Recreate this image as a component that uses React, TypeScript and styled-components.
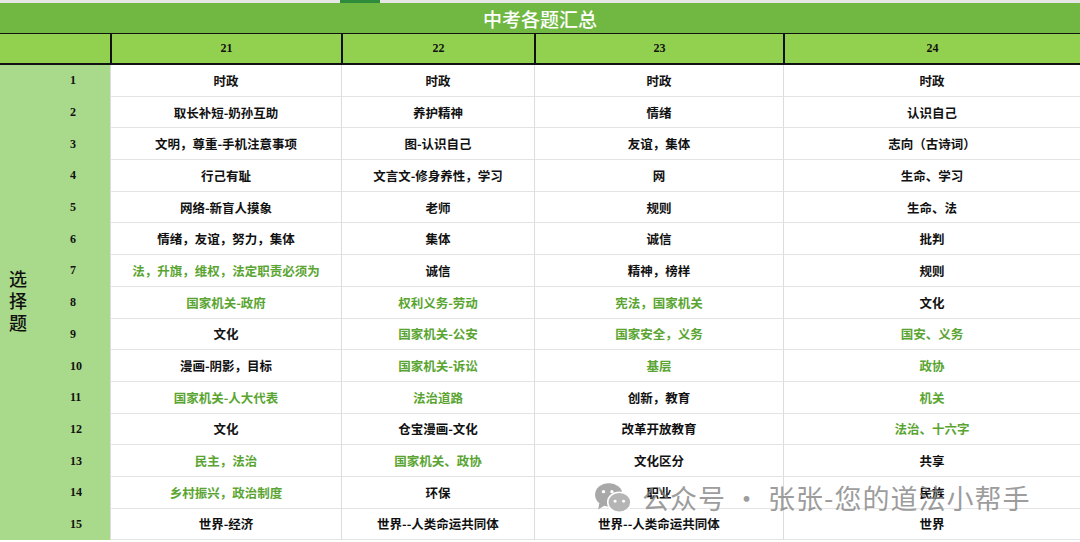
import React from "react";
import styled, { createGlobalStyle } from "styled-components";

const Global = createGlobalStyle`
  html, body { margin: 0; padding: 0; background: #fff; }
  body { font-family: "Liberation Serif", "Noto Sans CJK SC", serif; }
`;

const Page = styled.div`
  position: relative;
  width: 1080px;
  height: 542px;
  overflow: hidden;
`;
const TopStrip = styled.div`
  height: 3px;
  display: grid;
  grid-template-columns: 340px 40px 1fr;
  background: #e6e6e6;
  & > div:nth-child(2) { background: #2e8b3a; }
`;
const Title = styled.div`
  height: 30px;
  background: #71b843;
  color: #fff;
  font: 500 19px "Noto Sans CJK SC", sans-serif;
  display: flex;
  align-items: center;
  justify-content: center;
  border-bottom: 1px solid #111;
`;
const Grid = styled.div`
  display: grid;
  grid-template-columns: 110px 231px 193px 249px 1fr;
  grid-template-rows: 31px repeat(15, 31.7px);
  font: bold 13px "Liberation Serif", "Noto Sans CJK SC", serif;
  color: #111;
`;
const HeadCell = styled.div<{ first?: boolean }>`
  background: #92d050;
  display: flex;
  align-items: center;
  justify-content: center;
  border-left: ${p => (p.first ? "none" : "2px solid #111")};
  border-bottom: 2px solid #111;
  font-size: 12px;
`;
const Side = styled.div`
  grid-row: 2 / span 15;
  grid-column: 1;
  background: #a9d98a;
  display: grid;
  grid-template-columns: 36px 1fr;
  grid-template-rows: repeat(15, 31.7px);
`;
const SideLabel = styled.div`
  grid-row: 1 / span 15;
  display: flex;
  align-items: center;
  justify-content: center;
  font: 500 18px "Noto Sans CJK SC", sans-serif;
  writing-mode: vertical-rl;
  text-orientation: upright;
  line-height: 1;
  letter-spacing: 4px;
`;
const Num = styled.div`
  display: flex;
  align-items: center;
  justify-content: flex-start;
  padding-left: 34px;
  font-size: 12px;
`;
const Cell = styled.div<{ green?: boolean }>`
  display: flex;
  align-items: center;
  justify-content: center;
  border-left: 1px solid #dcdcdc;
  border-bottom: 1px solid #e4e4e4;
  color: ${p => (p.green ? "#5aa531" : "#111")};
  font-family: "Noto Sans CJK SC", sans-serif;
  font-weight: 700;
  font-size: 12.5px;
`;
const Watermark = styled.div`
  position: absolute;
  left: 594px;
  top: 478px;
  display: flex;
  align-items: center;
  gap: 10px;
  color: rgba(130,130,130,0.8);
  font: 27px "Noto Sans CJK SC", sans-serif;
  letter-spacing: 1px;
`;

const rows: [string, string, string, string][] = [
  ["时政", "时政", "时政", "时政"],
  ["取长补短-奶孙互助", "养护精神", "情绪", "认识自己"],
  ["文明，尊重-手机注意事项", "图-认识自己", "友谊，集体", "志向（古诗词）"],
  ["行己有耻", "文言文-修身养性，学习", "网", "生命、学习"],
  ["网络-新盲人摸象", "老师", "规则", "生命、法"],
  ["情绪，友谊，努力，集体", "集体", "诚信", "批判"],
  ["法，升旗，维权，法定职责必须为", "诚信", "精神，榜样", "规则"],
  ["国家机关-政府", "权利义务-劳动", "宪法，国家机关", "文化"],
  ["文化", "国家机关-公安", "国家安全，义务", "国安、义务"],
  ["漫画-阴影，目标", "国家机关-诉讼", "基层", "政协"],
  ["国家机关-人大代表", "法治道路", "创新，教育", "机关"],
  ["文化", "仓宝漫画-文化", "改革开放教育", "法治、十六字"],
  ["民主，法治", "国家机关、政协", "文化区分", "共享"],
  ["乡村振兴，政治制度", "环保", "职业", "民族"],
  ["世界-经济", "世界--人类命运共同体", "世界--人类命运共同体", "世界"],
];
const green: Record<number, number[]> = {
  7: [0], 8: [0, 1, 2], 9: [1, 2, 3], 10: [1, 2, 3], 11: [0, 1, 3], 12: [3], 13: [0, 1], 14: [0],
};

export default function App() {
  return (
    <Page>
      <Global />
      <TopStrip><div /><div /><div /></TopStrip>
      <Title>中考各题汇总</Title>
      <Grid>
        <HeadCell first />
        {["21", "22", "23", "24"].map(h => <HeadCell key={h}>{h}</HeadCell>)}
        <Side>
          <SideLabel>选择题</SideLabel>
          {rows.map((_, i) => <Num key={i} style={{ gridColumn: 2 }}>{i + 1}</Num>)}
        </Side>
        {rows.map((r, i) =>
          r.map((t, j) => (
            <Cell key={`${i}-${j}`} green={(green[i + 1] || []).includes(j)}>{t}</Cell>
          ))
        )}
      </Grid>
      <Watermark>
        <svg width="38" height="34" viewBox="0 0 36 32">
          <ellipse cx="14" cy="13" rx="13" ry="11" fill="#a8a8a8" />
          <path d="M5 21 L4 27 L10 23 Z" fill="#a8a8a8" />
          <ellipse cx="24" cy="20" rx="11" ry="9.5" fill="#b5b5b5" stroke="#fff" strokeWidth="1.5" />
          <circle cx="9" cy="10" r="1.6" fill="#fff" />
          <circle cx="17" cy="10" r="1.6" fill="#fff" />
          <circle cx="20" cy="19" r="1.4" fill="#fff" />
          <circle cx="28" cy="19" r="1.4" fill="#fff" />
        </svg>
        <span>公众号 · 张张-您的道法小帮手</span>
      </Watermark>
    </Page>
  );
}
